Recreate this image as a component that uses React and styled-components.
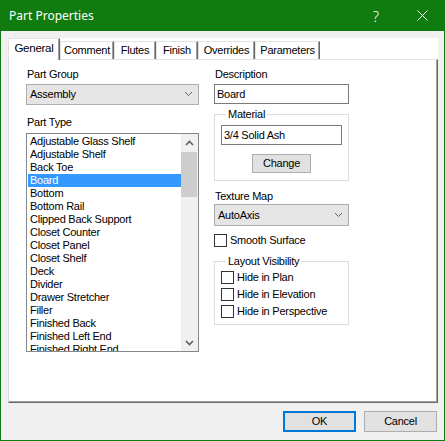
import React from 'react';
import styled, { createGlobalStyle } from 'styled-components';

const uiFont = `'Liberation Sans', Arial, sans-serif`;
const captionFont = `'Noto Sans', 'Open Sans', sans-serif`;

const GlobalStyle = createGlobalStyle`
  html, body {
    margin: 0;
    padding: 0;
    background: #ffffff;
  }
  * {
    box-sizing: border-box;
  }
`;

const partTypes = [
  'Adjustable Glass Shelf',
  'Adjustable Shelf',
  'Back Toe',
  'Board',
  'Bottom',
  'Bottom Rail',
  'Clipped Back Support',
  'Closet Counter',
  'Closet Panel',
  'Closet Shelf',
  'Deck',
  'Divider',
  'Drawer Stretcher',
  'Filler',
  'Finished Back',
  'Finished Left End',
  'Finished Right End',
];

const tabs = [
  { title: 'General', width: 52 },
  { title: 'Comment', width: 54 },
  { title: 'Flutes', width: 42 },
  { title: 'Finish', width: 42 },
  { title: 'Overrides', width: 57 },
  { title: 'Parameters', width: 65 },
];

const Window = styled.div`
  width: 445px;
  height: 441px;
  border: 1px solid #107c10;
  border-top: none;
  background: #f0f0f0;
  display: flex;
  flex-direction: column;
  font-family: ${uiFont};
  font-size: 11px;
  letter-spacing: -0.25px;
  color: #000;
  overflow: hidden;
`;

const TitleBar = styled.div`
  height: 31px;
  margin: 0 -1px;
  background: #107c10;
  color: #fff;
  display: flex;
  align-items: center;
  font-family: ${captionFont};
  font-size: 12px;
  letter-spacing: 0;
`;

const Caption = styled.div`
  flex: 1;
  padding-left: 9px;
  padding-bottom: 1px;
`;

const CaptionButton = styled.div`
  width: 46px;
  height: 31px;
  display: flex;
  align-items: center;
  justify-content: center;
  font-size: 15px;
  font-weight: 300;
`;

const Body = styled.div`
  flex: 1;
  display: flex;
  flex-direction: column;
  padding: 7px 6px 0 7px;
`;

const TabControl = styled.div`
  flex: 1;
  display: flex;
  flex-direction: column;
`;

const TabStrip = styled.div`
  height: 21px;
  display: flex;
  align-items: flex-end;
  background: #fff;
  position: relative;
  z-index: 1;
`;

const Tab = styled.div`
  width: ${p => p.width}px;
  height: ${p => (p.selected ? 22 : 18)}px;
  margin-bottom: ${p => (p.selected ? -1 : 0)}px;
  background: #fff;
  border-left: 1px solid #e3e3e3;
  border-top: 1px solid #e3e3e3;
  border-right: 1px solid #696969;
  box-shadow: inset -1px 0 0 #a0a0a0;
  display: flex;
  justify-content: center;
  padding-top: ${p => (p.selected ? 3 : 2)}px;
  line-height: 13px;
  font-size: ${p => (p.selected ? 11.5 : 11)}px;
`;

const Panel = styled.div`
  flex: 1;
  background: #fff;
  border-top: 1px solid #e3e3e3;
  border-left: 1px solid #d9d9d9;
  border-right: 1px solid #696969;
  border-bottom: 1px solid #696969;
  box-shadow: inset -1px -1px 0 #a0a0a0;
  display: flex;
  gap: 15px;
  padding: 8px 0 0 17px;
`;

const Column = styled.div`
  width: ${p => p.width}px;
  display: flex;
  flex-direction: column;
  align-items: flex-start;
`;

const Label = styled.div`
  height: 13px;
  line-height: 13px;
  padding-left: 1px;
  margin-top: ${p => p.top || 0}px;
  margin-bottom: ${p => (p.gap === undefined ? 3 : p.gap)}px;
`;

const Combo = styled.div`
  width: 100%;
  height: ${p => p.height || 21}px;
  background: #e5e5e5;
  border: 1px solid #adadad;
  display: flex;
  align-items: center;
  justify-content: space-between;
  padding: 0 5px 1px 3px;
`;

const TextBox = styled.input`
  width: ${p => p.width || 135}px;
  height: 20px;
  margin: 0;
  margin-top: ${p => p.top || 0}px;
  border: 1px solid #7a7a7a;
  background: #fff;
  padding: 0 2px 1px;
  font: inherit;
  letter-spacing: inherit;
  color: #000;
  outline: none;
`;

const ListBox = styled.div`
  width: 173px;
  height: 219px;
  border: 1px solid #828790;
  background: #fff;
  display: flex;
`;

const ListItems = styled.div`
  flex: 1;
  overflow: hidden;
  padding: 1px 0 0 1px;
`;

const ListItem = styled.div`
  height: 13px;
  line-height: 13px;
  padding-left: 2px;
  white-space: nowrap;
  background: ${p => (p.selected ? '#3399ff' : 'transparent')};
  color: ${p => (p.selected ? '#fff' : '#000')};
`;

const ScrollBar = styled.div`
  width: 17px;
  background: #f0f0f0;
  display: flex;
  flex-direction: column;
`;

const ScrollArrow = styled.div`
  height: 17px;
  display: flex;
  align-items: center;
  justify-content: center;
`;

const ScrollTrack = styled.div`
  flex: 1;
  padding: 1px 1px 0 0;
`;

const ScrollThumb = styled.div`
  height: 45px;
  background: #cdcdcd;
`;

const Group = styled.fieldset`
  width: 135px;
  margin: ${p => p.top || 0}px 0 0 0;
  padding: 0 6px ${p => p.bottom || 7}px 6px;
  border: 1px solid #dcdcdc;
  display: flex;
  flex-direction: column;
  min-width: 0;
`;

const Legend = styled.legend`
  line-height: 13px;
  padding: 0 2px;
  margin-left: 5px;
`;

const PushButton = styled.button`
  width: ${p => p.width || 73}px;
  height: ${p => p.height || 21}px;
  margin: ${p => p.top || 0}px 0 0 0;
  align-self: ${p => (p.centered ? 'center' : 'auto')};
  background: #e1e1e1;
  border: ${p => (p.isDefault ? '2px solid #0078d7' : '1px solid #adadad')};
  border-radius: 0;
  padding: 0 0 1px;
  font: inherit;
  letter-spacing: inherit;
  color: #000;
`;

const CheckRow = styled.div`
  height: ${p => p.height || 17}px;
  margin-top: ${p => p.top || 0}px;
  display: flex;
  align-items: flex-start;
  gap: 3px;
  line-height: 13px;
`;

const CheckBox = styled.span`
  width: 13px;
  height: 13px;
  border: 1px solid #333;
  background: #fff;
  flex-shrink: 0;
`;

const ButtonRow = styled.div`
  display: flex;
  justify-content: flex-end;
  gap: 8px;
  margin: 8px 1px 0 0;
  padding-bottom: 8px;
`;

const Chevron = ({ up, width = 1, color = '#606060' }) => (
  <svg width="9" height="6" viewBox="0 0 9 6">
    <polyline
      points={up ? '1,5 4.5,1.5 8,5' : '1,1 4.5,4.5 8,1'}
      fill="none"
      stroke={color}
      strokeWidth={width}
    />
  </svg>
);

const CloseGlyph = () => (
  <svg width="11" height="11" viewBox="0 0 11 11">
    <path d="M0.5 0.5 L10.5 10.5 M10.5 0.5 L0.5 10.5" stroke="#fff" strokeWidth="1" />
  </svg>
);

const Check = ({ label, height, top }) => (
  <CheckRow height={height} top={top}>
    <CheckBox />
    <span>{label}</span>
  </CheckRow>
);

const App = () => {
  return (
    <>
      <GlobalStyle />
      <Window>
        <TitleBar>
          <Caption>Part Properties</Caption>
          <CaptionButton>?</CaptionButton>
          <CaptionButton>
            <CloseGlyph />
          </CaptionButton>
        </TitleBar>
        <Body>
          <TabControl>
            <TabStrip>
              {tabs.map((tab, i) => (
                <Tab key={tab.title} width={tab.width} selected={i === 0}>
                  {tab.title}
                </Tab>
              ))}
            </TabStrip>
            <Panel>
              <Column width={173}>
                <Label>Part Group</Label>
                <Combo>
                  <span>Assembly</span>
                  <Chevron />
                </Combo>
                <Label top={11} gap={4}>
                  Part Type
                </Label>
                <ListBox>
                  <ListItems>
                    {partTypes.map(item => (
                      <ListItem key={item} selected={item === 'Board'}>
                        {item}
                      </ListItem>
                    ))}
                  </ListItems>
                  <ScrollBar>
                    <ScrollArrow>
                      <Chevron up width={1.6} />
                    </ScrollArrow>
                    <ScrollTrack>
                      <ScrollThumb />
                    </ScrollTrack>
                    <ScrollArrow>
                      <Chevron width={1.6} />
                    </ScrollArrow>
                  </ScrollBar>
                </ListBox>
              </Column>
              <Column width={135}>
                <Label>Description</Label>
                <TextBox readOnly value="Board" />
                <Group top={4}>
                  <Legend>Material</Legend>
                  <TextBox readOnly value="3/4 Solid Ash" width={121} top={4} />
                  <PushButton width={59} height={19} top={9} centered>
                    Change
                  </PushButton>
                </Group>
                <Label top={9} gap={1}>
                  Texture Map
                </Label>
                <Combo height={22}>
                  <span>AutoAxis</span>
                  <Chevron />
                </Combo>
                <Check label="Smooth Surface" top={8} height={13} />
                <Group top={8} bottom={6}>
                  <Legend>Layout Visibility</Legend>
                  <Check label="Hide in Plan" top={3} />
                  <Check label="Hide in Elevation" />
                  <Check label="Hide in Perspective" height={13} />
                </Group>
              </Column>
            </Panel>
          </TabControl>
          <ButtonRow>
            <PushButton isDefault>OK</PushButton>
            <PushButton>Cancel</PushButton>
          </ButtonRow>
        </Body>
      </Window>
    </>
  );
};

export default App;
